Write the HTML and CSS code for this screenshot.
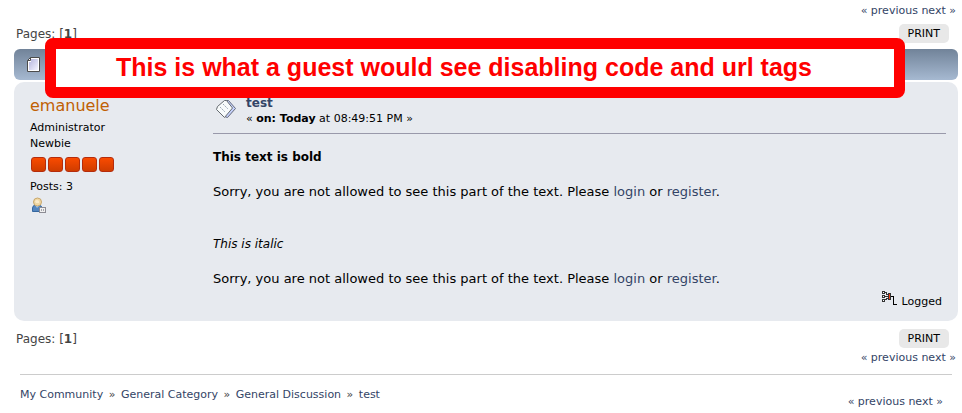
FILE: index.html
```
<!DOCTYPE html>
<html lang="en">

<head>
  <meta charset="UTF-8">
  <meta name="viewport" content="width=device-width, initial-scale=1.0">
  <title>test</title>
  <link rel="stylesheet" href="styles.css">
</head>

<body>
  <div class="wrapper">
    <div class="nextlinks"><a href="#">« previous</a> <a href="#">next »</a></div>
    <div class="pagesection">
      <div class="pagelinks">Pages: [<strong>1</strong>]</div>
      <button class="print">PRINT</button>
    </div>

    <div class="cat-bar">
      <svg class="cat-bar__icon" width="14" height="16" viewBox="0 0 14 16">
        <defs>
          <linearGradient id="page" x1="0" y1="0" x2="1" y2="1">
            <stop offset="0" stop-color="#b4b4dc" />
            <stop offset="1" stop-color="#f4f4ff" />
          </linearGradient>
        </defs>
        <path d="M4.500 .5h9v14h-12v-11z" fill="#fff" stroke="#4c4c4c" />
        <path d="M5 2h7v11H3V5h2z" fill="url(#page)" />
        <path d="M1.500 3.500h3v-3" fill="none" stroke="#4c4c4c" />
      </svg>
      <div class="notice">This is what a guest would see disabling code and url tags</div>
    </div>

    <div class="post">
      <div class="poster">
        <h4 class="poster__name"><a href="#">emanuele</a></h4>
        <ul class="poster__info">
          <li>Administrator</li>
          <li>Newbie</li>
          <li class="stars"><i></i><i></i><i></i><i></i><i></i></li>
          <li class="poster__posts">Posts: 3</li>
          <li>
            <a href="#" class="profile" aria-label="View profile">
              <svg width="16" height="16" viewBox="0 0 16 16">
                <path d="M1.500 14.500V11q0-3 4-3h2q3 0 3.500 3v3.500z" fill="#5385be" stroke="#35679f" />
                <path d="M4 8l2 3 3-3z" fill="#a6c5e7" />
                <circle cx="6.500" cy="5" r="4" fill="#f1d8a4" stroke="#c8a76c" />
                <path d="M4 4q2-2 4 0v2H5z" fill="#fbebc7" />
                <rect x="8.500" y="10.500" width="6" height="5" fill="#f0f0f0" stroke="#8c8c94" />
                <path d="M10.500 12v2M12.500 12v2" stroke="#a5a5ab" />
              </svg>
            </a>
          </li>
        </ul>
      </div>

      <div class="postarea">
        <div class="keyinfo">
          <svg class="keyinfo__icon" width="22" height="20" viewBox="0 0 22 20">
            <path d="M11.500 1.500h2l7 8-8 9-3-1z" fill="#c5d1fb" stroke="#656b7d" />
            <path d="M9.500 1.500h2l6 7.500-8 9.500-8-8 1-3z" fill="#f8fbfb" stroke="#656b70" />
            <path d="M5 8l5 5M8 5l5 5" fill="none" stroke="#9aa7b5" stroke-dasharray="2 1" />
          </svg>
          <div>
            <h5 class="keyinfo__title"><a href="#">test</a></h5>
            <div class="keyinfo__date">« <strong>on: Today</strong> at 08:49:51 PM »</div>
          </div>
        </div>
        <div class="message">
          <p><strong>This text is bold</strong></p>
          <p>Sorry, you are not allowed to see this part of the text. Please <a href="#">login</a> or <a href="#">register</a>.</p>
          <p class="message__second"><em>This is italic</em></p>
          <p>Sorry, you are not allowed to see this part of the text. Please <a href="#">login</a> or <a href="#">register</a>.</p>
        </div>
        <div class="logged">
          <svg width="16" height="15" viewBox="0 0 16 15" shape-rendering="crispEdges">
            <path d="M0 0h3v3H0zM0 4h3v3H0zM0 8h3v3H0z" fill="#333" />
            <path d="M3 1h2v2h2v1H4V2H3zM3 5h4v1H3zM3 9h2V8h2V7H4v1H3z" fill="#333" />
            <path d="M1 1h1v1H1zM1 5h1v1H1zM1 9h1v1H1z" fill="#fff" />
            <path d="M6 2h3v7H6z" fill="#333" />
            <path d="M7 3h1v5H7z" fill="#f33b12" />
            <path d="M9 5h3v8h3v1h-4V6H9z" fill="#000" />
          </svg>
          <span>Logged</span>
        </div>
      </div>
    </div>

    <div class="pagesection pagesection_bottom">
      <div class="pagelinks">Pages: [<strong>1</strong>]</div>
      <button class="print">PRINT</button>
    </div>
    <div class="nextlinks"><a href="#">« previous</a> <a href="#">next »</a></div>

    <div class="footer">
      <nav class="linktree">
        <a href="#">My Community</a> <span>»</span>
        <a href="#">General Category</a> <span>»</span>
        <a href="#">General Discussion</a> <span>»</span>
        <a href="#">test</a>
      </nav>
      <div class="footer__links"><a href="#">« previous</a> <a href="#">next »</a></div>
    </div>
  </div>
</body>

</html>
```
FILE: styles.css
```
* {
  box-sizing: border-box;
}

body {
  margin: 0;
  background: #fff;
  color: #000;
  font: 11px/16px "DejaVu Sans", sans-serif;
}

a {
  color: #334466;
  text-decoration: none;
}

h4, h5, p, ul {
  margin: 0;
  padding: 0;
}

ul {
  list-style: none;
}

.wrapper {
  padding: 3px 4px 0 14px;
}

.nextlinks {
  padding-right: 2px;
  text-align: right;
}

.pagesection {
  display: flex;
  justify-content: space-between;
  align-items: center;
  height: 19px;
  margin: 5px 9px 6px 2px;
  color: #444;
}

.pagesection_bottom {
  margin: 8px 9px 2px 2px;
}

.pagelinks {
  padding-top: 1px;
  font-size: 12px;
}

.print {
  height: 19px;
  padding: 0 9px;
  border: none;
  border-radius: 5px;
  background: #e8e8e8;
  color: #000;
  font: 11px/19px "DejaVu Sans", sans-serif;
  cursor: pointer;
}

.cat-bar {
  position: relative;
  display: flex;
  align-items: center;
  height: 31px;
  padding: 0 12px;
  border-radius: 6px;
  background: linear-gradient(#718399, #a6b9d1);
}

/* overlaps the title bar and the top of the post */
.notice {
  position: absolute;
  top: -11px;
  left: 31px;
  right: 53px;
  height: 60px;
  padding-left: 60px;
  border: 11px solid #f00;
  border-radius: 8px;
  background: #fff;
  color: #f00;
  font: bold 25px/36px "Liberation Sans", sans-serif;
  white-space: nowrap;
}

.post {
  display: flex;
  margin-top: 2px;
  padding: 14px 12px 11px 16px;
  border-radius: 10px;
  background: #e7eaef;
}

.poster {
  flex: 0 0 183px;
}

.poster__name {
  margin-bottom: 5px;
  font-size: 16px;
  line-height: 19px;
  font-weight: normal;
}

.poster__name a {
  color: #c06002;
}

.stars {
  display: flex;
  gap: 2px;
  padding: 5px 1px 7px;
}

.stars i {
  width: 15px;
  height: 15px;
  border: 1px solid #b52c0c;
  border-radius: 3px;
  background: linear-gradient(#fa4b00, #cf3c00);
}

.poster__posts {
  margin-bottom: 2px;
}

.profile {
  display: block;
  height: 16px;
  padding-left: 1px;
}

.postarea {
  flex: 1;
}

.keyinfo {
  display: flex;
  gap: 9px;
  padding: 0 0 6px 2px;
  border-bottom: 1px solid #99a;
}

.keyinfo__icon {
  margin-top: 3px;
}

.keyinfo__title {
  font-size: 12px;
  line-height: 15px;
}

.message {
  padding-top: 14px;
  font-size: 13px;
  line-height: 18px;
}

.message strong,
.message em {
  font-size: 12px;
}

.message p + p {
  margin-top: 17px;
}

.message .message__second {
  margin-top: 34px;
}

.logged {
  display: flex;
  justify-content: flex-end;
  gap: 4px;
  padding: 3px 4px 0 0;
}

.logged span {
  padding-top: 3px;
}

.footer {
  display: flex;
  justify-content: space-between;
  margin: 8px 6px 0;
  padding: 12px 9px 0 0;
  border-top: 1px solid #ccc;
}

.linktree span {
  padding: 0 2px;
  color: #444;
}

.footer__links {
  padding-top: 7px;
}
```
